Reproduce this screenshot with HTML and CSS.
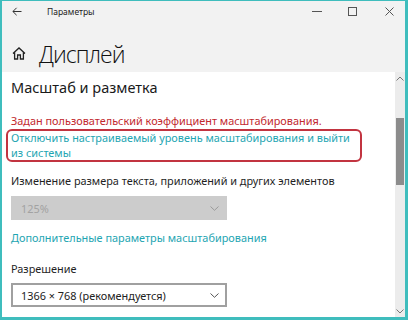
FILE: index.html
```html
<!DOCTYPE html>
<html lang="ru">
<head>
<meta charset="utf-8">
<link rel="stylesheet" href="styles.css">
</head>
<body>
<div class="window">
  <div class="titlebar">
    <svg class="back" width="10" height="9" viewBox="0 0 10 9"><path d="M9.5 4.5H1M4.6 0.8L0.9 4.5L4.6 8.2" fill="none" stroke="#333" stroke-width="1"/></svg>
    <span class="apptitle">Параметры</span>
    <div class="controls">
      <svg width="10" height="9" viewBox="0 0 10 9"><path d="M0 4.5H10" stroke="#555" stroke-width="1"/></svg>
      <svg width="9" height="9" viewBox="0 0 9 9"><rect x="0.5" y="0.5" width="8" height="8" fill="none" stroke="#555" stroke-width="1"/></svg>
      <svg width="9" height="9" viewBox="0 0 9 9"><path d="M0.5 0.5L8.5 8.5M8.5 0.5L0.5 8.5" stroke="#555" stroke-width="1"/></svg>
    </div>
  </div>
  <div class="header">
    <svg class="home" width="14" height="13" viewBox="0 0 14 13"><path d="M1 6.5L7 1L13 6.5M2.6 5.2V12H5.6V8H8.4V12H11.4V5.2" fill="none" stroke="#222" stroke-width="1.3"/></svg>
    <h1 class="title">Дисплей</h1>
  </div>
  <div class="body">
    <div class="main">
      <h2 class="section">Масштаб и разметка</h2>
      <p class="warn">Задан пользовательский коэффициент масштабирования.</p>
      <div class="highlight">
        <a class="link">Отключить настраиваемый уровень масштабирования и выйти из системы</a>
      </div>
      <p class="label">Изменение размера текста, приложений и других элементов</p>
      <div class="select disabled">
        <span>125%</span>
        <svg width="9" height="5" viewBox="0 0 9 5"><path d="M0.5 0.5L4.5 4.3L8.5 0.5" fill="none" stroke="#9a9a9a" stroke-width="1"/></svg>
      </div>
      <a class="link more">Дополнительные параметры масштабирования</a>
      <p class="label res">Разрешение</p>
      <div class="select">
        <span>1366 × 768 (рекомендуется)</span>
        <svg width="9" height="5" viewBox="0 0 9 5"><path d="M0.5 0.5L4.5 4.3L8.5 0.5" fill="none" stroke="#555" stroke-width="1"/></svg>
      </div>
    </div>
    <div class="scrollbar">
      <svg class="arrow" width="8" height="5" viewBox="0 0 8 5"><path d="M0.5 4.5L4 1L7.5 4.5" fill="none" stroke="#777" stroke-width="1"/></svg>
      <div class="track"><div class="thumb"></div></div>
      <svg class="arrow" width="8" height="5" viewBox="0 0 8 5"><path d="M0.5 0.5L4 4L7.5 0.5" fill="none" stroke="#777" stroke-width="1"/></svg>
    </div>
  </div>
</div>
</body>
</html>
```

FILE: styles.css
```css
* { box-sizing: border-box; }
html, body { margin: 0; padding: 0; }
body {
  font-family: "Noto Sans", "Open Sans", sans-serif;
  color: #1f1f1f;
  background: #fff;
}
.window {
  width: 408px;
  height: 320px;
  border-style: solid;
  border-color: #3fbdbd;
  border-width: 1px 3px 3px 2px;
  display: flex;
  flex-direction: column;
  background: #f2f2f2;
  overflow: hidden;
}
.titlebar {
  height: 20px;
  display: flex;
  align-items: center;
  padding-left: 10px;
}
.back { margin-right: 25px; }
.apptitle { font-size: 8.5px; color: #222; }
.controls {
  margin-left: auto;
  display: flex;
  align-items: center;
  padding-right: 11px;
}
.controls svg:nth-child(2) { margin-left: 26px; }
.controls svg:nth-child(3) { margin-left: 28px; }
.header {
  height: 51px;
  display: flex;
  align-items: center;
  padding-left: 10px;
  padding-top: 14px;
}
.home { margin-right: 13px; }
.title {
  margin: 0;
  font-family: "Open Sans", sans-serif;
  font-weight: 300;
  font-size: 23px;
  letter-spacing: -1px;
  color: #111;
}
.body {
  flex: 1;
  display: flex;
  min-height: 0;
}
.main {
  flex: 1;
  background: #fff;
  padding: 5px 0 0 9px;
}
.section {
  margin: 0 0 16px;
  font-weight: 400;
  font-size: 14.5px;
  line-height: 20px;
  color: #1a1a1a;
}
.warn {
  margin: 0;
  color: #c2282e;
  font-size: 10.9px;
  line-height: 15px;
}
.highlight {
  margin: 1px 0 0 -5px;
  width: 356px;
  border: 2px solid #c23440;
  border-radius: 6px;
  padding: 0 0 0 3px;
}
.link {
  color: #1ea5b2;
  font-size: 10.9px;
  line-height: 15px;
  display: block;
}
.highlight .link { margin-top: -1px; }
.label {
  margin: 11px 0 0;
  font-size: 10.9px;
  line-height: 15px;
  color: #1f1f1f;
}
.select {
  width: 216px;
  height: 24px;
  margin-top: 8px;
  border: 2px solid #a0a0a0;
  display: flex;
  align-items: center;
  justify-content: space-between;
  padding: 0 6px 0 8px;
  font-size: 10.9px;
  color: #222;
}
.select.disabled {
  background: #cccccc;
  border-color: #cccccc;
  color: #a2a2a2;
}
.more { margin-top: 10px; }
.res { margin-top: 16px; }
.res + .select { margin-top: 7px; }
.scrollbar {
  width: 10px;
  background: #ececec;
  display: flex;
  flex-direction: column;
  align-items: center;
  padding: 4px 0 3px;
}
.arrow { flex: none; }
.track {
  flex: 1;
  width: 100%;
  padding-top: 37px;
}
.thumb {
  width: 8px;
  margin-left: 1px;
  height: 67px;
  background: #8c8c8c;
}
```
